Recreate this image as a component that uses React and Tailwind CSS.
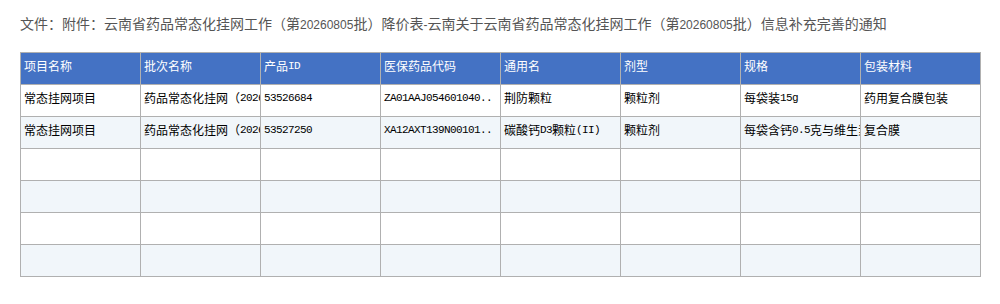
import React from "react";

const headers = ["项目名称", "批次名称", "产品ID", "医保药品代码", "通用名", "剂型", "规格", "包装材料"];
const rows = [
  ["常态挂网项目", "药品常态化挂网（20260805批）", "53526684", "ZA01AAJ054601040..", "荆防颗粒", "颗粒剂", "每袋装15g", "药用复合膜包装"],
  ["常态挂网项目", "药品常态化挂网（20260805批）", "53527250", "XA12AXT139N00101..", "碳酸钙D3颗粒(II)", "颗粒剂", "每袋含钙0.5克与维生素D3", "复合膜"],
  ["", "", "", "", "", "", "", ""],
  ["", "", "", "", "", "", "", ""],
  ["", "", "", "", "", "", "", ""],
  ["", "", "", "", "", "", "", ""],
];

function Mixed({ text, mono }) {
  const parts = text.match(/[\x20-\x7e]+|[^\x20-\x7e]+/g) || [];
  return parts.map((p, i) =>
    /^[\x20-\x7e]+$/.test(p) ? (
      <span
        key={i}
        className={
          mono
            ? "font-['Liberation_Mono',monospace] text-[11px] tracking-[-0.6px]"
            : "font-['Liberation_Sans',sans-serif] text-[12px]"
        }
      >
        {p}
      </span>
    ) : (
      <span key={i}>{p}</span>
    )
  );
}

export default function App() {
  return (
    <div className="bg-white w-[1000px] h-[304px] font-['Noto_Sans_CJK_SC',sans-serif]">
      <div className="pt-[13px] pl-[20px] text-[14px] leading-[20px] text-[#555] whitespace-nowrap">
        <Mixed text="文件：附件：云南省药品常态化挂网工作（第20260805批）降价表-云南关于云南省药品常态化挂网工作（第20260805批）信息补充完善的通知" />
      </div>
      <div className="ml-[20px] mt-[17px] w-[961px] border-l border-t border-[#b0b0b0] grid grid-cols-[repeat(8,120px)]">
        {headers.map((h, i) => (
          <div
            key={i}
            className="h-[32px] border-r border-b border-[#b0b0b0] bg-[#4472c4] text-white text-[12px] flex items-center pl-[3px] pb-[5px] overflow-hidden whitespace-nowrap"
          >
            <Mixed text={h} mono />
          </div>
        ))}
        {rows.map((r, ri) =>
          r.map((c, ci) => (
            <div
              key={ri + "-" + ci}
              className={
                "h-[32px] border-r border-b border-[#b0b0b0] text-black text-[12px] flex items-center pl-[3px] pb-[5px] overflow-hidden whitespace-nowrap " +
                (ri % 2 === 1 ? "bg-[#f1f6fa]" : "bg-white")
              }
            >
              <Mixed text={c} mono />
            </div>
          ))
        )}
      </div>
    </div>
  );
}
